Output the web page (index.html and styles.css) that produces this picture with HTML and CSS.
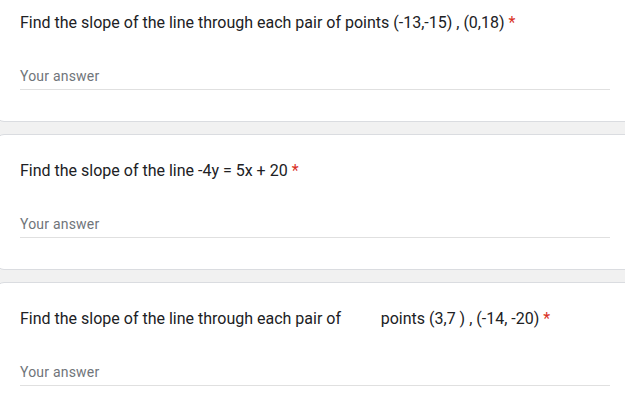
FILE: index.html
```html
<!DOCTYPE html>
<html lang="en">
<head>
<meta charset="utf-8">
<title>Quiz</title>
<link rel="stylesheet" href="styles.css">
</head>
<body>
<main class="form">
  <section class="card first">
    <div class="title">Find the slope of the line through each pair of points (-13,-15) , (0,18)<span class="req">*</span></div>
    <div class="answer"><span class="placeholder">Your answer</span></div>
  </section>
  <section class="card">
    <div class="title">Find the slope of the line -4y = 5x + 20<span class="req">*</span></div>
    <div class="answer"><span class="placeholder">Your answer</span></div>
  </section>
  <section class="card">
    <div class="title">Find the slope of the line through each pair of          points (3,7 ) , (-14, -20)<span class="req">*</span></div>
    <div class="answer"><span class="placeholder">Your answer</span></div>
  </section>
</main>
</body>
</html>
```

FILE: styles.css
```css
html, body {
  margin: 0;
  padding: 0;
  background: #f1f1f1;
  overflow: hidden;
}

body {
  font-family: Roboto, "Liberation Sans", Arial, sans-serif;
  color: #202124;
}

.form {
  display: flex;
  flex-direction: column;
  gap: 12px;
  margin-left: -4px;
  margin-right: -20px;
}

.card {
  background: #fff;
  border: 1px solid #dadce0;
  border-radius: 8px;
  padding: 24px 24px 31px 23px;
}

.card.first {
  margin-top: -14px;
}

.title {
  font-size: 16px;
  line-height: 24px;
  white-space: pre-wrap;
}

.req {
  color: #d93025;
  padding-left: 0.25em;
}

.answer {
  margin-top: 29px;
  width: 590px;
  height: 25px;
  border-bottom: 1px solid #e0e0e0;
  font-size: 14px;
  line-height: 25px;
}

.placeholder {
  color: #70757a;
  letter-spacing: 0.2px;
}
```
